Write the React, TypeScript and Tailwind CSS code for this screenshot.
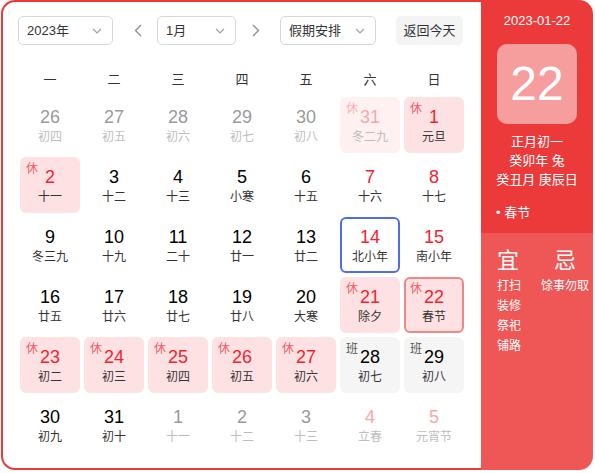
import React from "react";

type Tag = "休" | "班";

interface Day {
  d: number;
  lunar: string;
  other?: boolean; // not in current month
  weekend?: boolean;
  tag?: Tag;
  selected?: boolean;
  today?: boolean;
}

const weeks: Day[][] = [
  [
    { d: 26, lunar: "初四", other: true },
    { d: 27, lunar: "初五", other: true },
    { d: 28, lunar: "初六", other: true },
    { d: 29, lunar: "初七", other: true },
    { d: 30, lunar: "初八", other: true },
    { d: 31, lunar: "冬二九", other: true, weekend: true, tag: "休" },
    { d: 1, lunar: "元旦", weekend: true, tag: "休" },
  ],
  [
    { d: 2, lunar: "十一", tag: "休" },
    { d: 3, lunar: "十二" },
    { d: 4, lunar: "十三" },
    { d: 5, lunar: "小寒" },
    { d: 6, lunar: "十五" },
    { d: 7, lunar: "十六", weekend: true },
    { d: 8, lunar: "十七", weekend: true },
  ],
  [
    { d: 9, lunar: "冬三九" },
    { d: 10, lunar: "十九" },
    { d: 11, lunar: "二十" },
    { d: 12, lunar: "廿一" },
    { d: 13, lunar: "廿二" },
    { d: 14, lunar: "北小年", weekend: true, today: true },
    { d: 15, lunar: "南小年", weekend: true },
  ],
  [
    { d: 16, lunar: "廿五" },
    { d: 17, lunar: "廿六" },
    { d: 18, lunar: "廿七" },
    { d: 19, lunar: "廿八" },
    { d: 20, lunar: "大寒" },
    { d: 21, lunar: "除夕", weekend: true, tag: "休" },
    { d: 22, lunar: "春节", weekend: true, tag: "休", selected: true },
  ],
  [
    { d: 23, lunar: "初二", tag: "休" },
    { d: 24, lunar: "初三", tag: "休" },
    { d: 25, lunar: "初四", tag: "休" },
    { d: 26, lunar: "初五", tag: "休" },
    { d: 27, lunar: "初六", tag: "休" },
    { d: 28, lunar: "初七", weekend: true, tag: "班" },
    { d: 29, lunar: "初八", weekend: true, tag: "班" },
  ],
  [
    { d: 30, lunar: "初九" },
    { d: 31, lunar: "初十" },
    { d: 1, lunar: "十一", other: true },
    { d: 2, lunar: "十二", other: true },
    { d: 3, lunar: "十三", other: true },
    { d: 4, lunar: "立春", other: true, weekend: true },
    { d: 5, lunar: "元宵节", other: true, weekend: true },
  ],
];

const FONT = { fontFamily: '"Liberation Sans", "Noto Sans CJK SC", sans-serif' };

function ChevronDown() {
  return (
    <svg width="10" height="6" viewBox="0 0 10 6" fill="none">
      <path d="M1 0.8 L5 5 L9 0.8" stroke="#9a9ca3" strokeWidth="1.2" />
    </svg>
  );
}

function Select({ label, width }: { label: string; width: string }) {
  return (
    <div
      className={`flex h-[29px] items-center justify-between rounded-[5px] border border-[#d6d8de] pl-[8px] pr-[10px] text-[13px] text-[#333] ${width}`}
    >
      <span>{label}</span>
      <ChevronDown />
    </div>
  );
}

function DayCell({ day }: { day: Day }) {
  const rest = day.tag === "休";
  const work = day.tag === "班";

  let num = "text-black";
  if (day.other) num = day.weekend ? "text-[#f7a9a9]" : "text-[#9a9a9a]";
  else if (day.weekend || rest) num = "text-[#f5222d]";
  if (work) num = "text-black";

  const lunar = day.other ? "text-[#bdbdbd]" : "text-[#333]";

  let bg = "";
  if (rest) bg = day.other ? "bg-[#fff0f1]" : "bg-[#fee2e3]";
  if (work) bg = "bg-[#f5f5f5]";

  let border = "";
  if (day.selected) border = "border-2 border-[#f08686]";
  if (day.today) border = "border-2 border-[#4e6ef2]";

  const tagColor = work ? "text-[#555]" : day.other ? "text-[#fbb3b8]" : "text-[#f25c67]";

  return (
    <div className={`relative flex h-[56px] w-[60px] flex-col items-center rounded-[6px] ${bg} ${border}`}>
      {day.tag && (
        <span
          className={`absolute text-[12px] leading-[12px] ${tagColor} ${
            day.selected ? "left-[4px] top-[4px]" : "left-[6px] top-[6px]"
          }`}
        >
          {day.tag}
        </span>
      )}
      <div className={`flex flex-col items-center ${day.selected || day.today ? "pt-[7px]" : "pt-[9px]"}`}>
        <span className={`text-[18px] leading-[22px] ${num}`}>{day.d}</span>
        <span className={`mt-[1px] text-[12px] leading-[16px] ${lunar}`}>{day.lunar}</span>
      </div>
    </div>
  );
}

export default function App() {
  return (
    <div className="h-[473px] w-[595px] bg-white" style={FONT}>
      <div className="ml-px flex h-[470px] w-[592px]">
        {/* Calendar side */}
        <div className="h-full w-[480px] rounded-l-[14px] border-y-2 border-l-2 border-[#ec3a3a] pl-[15px] pt-[14px]">
          {/* Toolbar */}
          <div className="flex h-[29px] items-center">
            <Select label="2023年" width="w-[95px]" />
            <svg className="ml-[21px]" width="8" height="13" viewBox="0 0 8 13" fill="none">
              <path d="M7 1 L1.5 6.5 L7 12" stroke="#8a8c93" strokeWidth="1.3" />
            </svg>
            <div className="ml-[15px]">
              <Select label="1月" width="w-[79px]" />
            </div>
            <svg className="ml-[16px]" width="8" height="13" viewBox="0 0 8 13" fill="none">
              <path d="M1 1 L6.5 6.5 L1 12" stroke="#8a8c93" strokeWidth="1.3" />
            </svg>
            <div className="ml-[20px]">
              <Select label="假期安排" width="w-[96px]" />
            </div>
            <button className="ml-[20px] flex h-[29px] w-[67px] items-center justify-center rounded-[5px] bg-[#f4f4f5] text-[13px] text-[#333]">
              返回今天
            </button>
          </div>

          {/* Week header */}
          <div className="ml-[2px] mt-[19px] grid h-[32px] grid-cols-[repeat(7,60px)] items-center gap-x-[4px] text-[13px] text-[#333]">
            {["一", "二", "三", "四", "五", "六", "日"].map((w) => (
              <span key={w} className="text-center">
                {w}
              </span>
            ))}
          </div>

          {/* Days */}
          <div className="ml-[2px] mt-px grid grid-cols-[repeat(7,60px)] gap-x-[4px] gap-y-[4px]">
            {weeks.flat().map((day, i) => (
              <DayCell key={i} day={day} />
            ))}
          </div>
        </div>

        {/* Detail side */}
        <div className="flex h-full w-[112px] flex-col overflow-hidden rounded-r-[14px] text-white">
          <div className="flex h-[233px] flex-col bg-[#ec3a3a] pt-[12px]">
            <div className="text-center text-[13px] leading-[18px]">2023-01-22</div>
            <div className="mx-auto mt-[14px] flex h-[80px] w-[80px] items-center justify-center rounded-[10px] bg-white/50">
              <span className="text-[48px] leading-none">22</span>
            </div>
            <div className="mt-[8px] flex flex-col items-center text-[13px] leading-[19px]">
              <span>正月初一</span>
              <span>癸卯年 兔</span>
              <span>癸丑月 庚辰日</span>
            </div>
            <div className="mt-[14px] pl-[15px] text-[13px] leading-[19px]">• 春节</div>
          </div>
          <div className="flex flex-1 bg-[#ef5656] pl-[16px] pt-[15px]">
            <div className="flex w-[44px] flex-col">
              <span className="text-[22px] leading-[26px]">宜</span>
              <div className="mt-[2px] flex flex-col text-[12px] leading-[20px]">
                <span>打扫</span>
                <span>装修</span>
                <span>祭祀</span>
                <span>铺路</span>
              </div>
            </div>
            <div className="flex w-[48px] flex-col items-center">
              <span className="text-[22px] leading-[26px]">忌</span>
              <div className="mt-[2px] text-[12px] leading-[20px]">馀事勿取</div>
            </div>
          </div>
        </div>
      </div>
    </div>
  );
}
